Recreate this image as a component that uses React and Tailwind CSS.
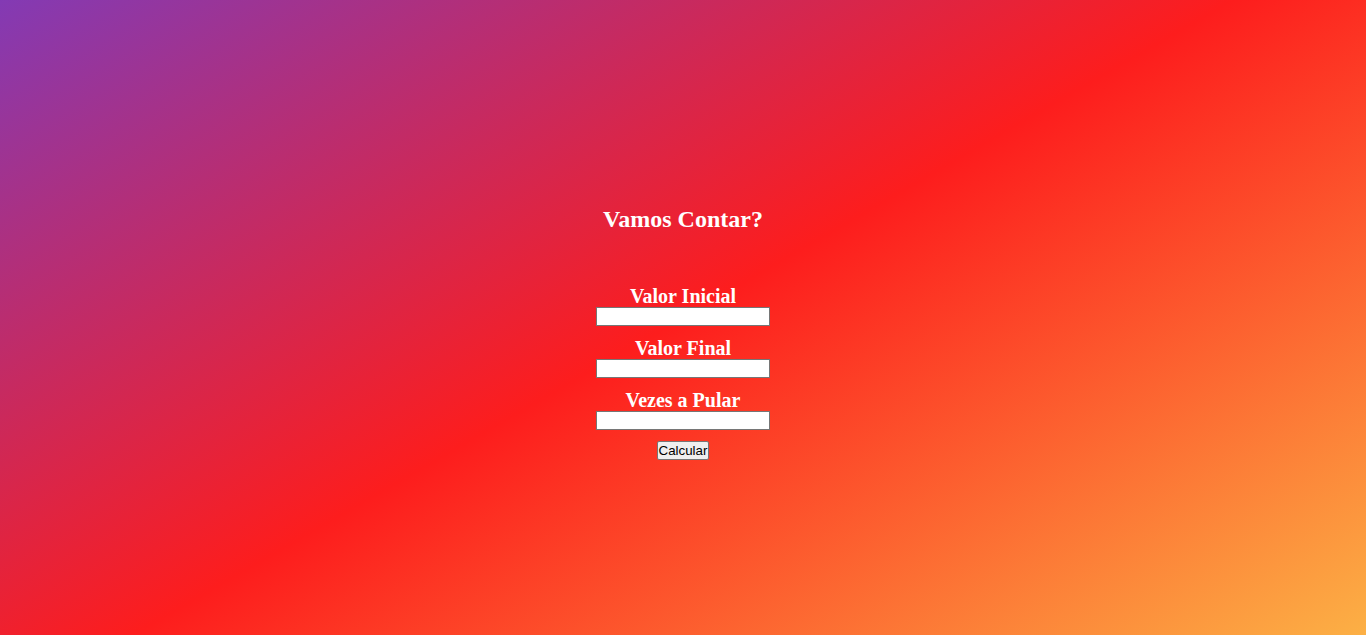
import React from "react";

const fields = ["Valor Inicial", "Valor Final", "Vezes a Pular"];

const App = () => {
  return (
    <div className="min-h-screen w-full bg-[linear-gradient(150deg,#833ab4,#fd1d1d,#fcb045)] font-['Liberation_Serif','Times_New_Roman',serif] text-white">
      <div className="flex flex-col items-center pt-[206px]">
        <h2 className="text-[24px] font-bold leading-[27px]">Vamos Contar?</h2>

        <div className="flex flex-col items-center mt-[52px]">
          {fields.map((label, index) => (
            <div key={index} className="flex flex-col items-center mb-[11px]">
              <label className="text-[20px] font-bold leading-[22px]">{label}</label>
              <input
                type="text"
                className="w-[174px] h-[19px] bg-white border border-solid border-[#767676] px-[2px] text-[13.33px] text-black font-['Liberation_Sans',Arial,sans-serif] outline-none"
              />
            </div>
          ))}
          <button className="h-[19px] px-[1px] bg-[#efefef] border border-solid border-[#767676] rounded-[2px] text-[13.33px] leading-[15px] text-black font-['Liberation_Sans',Arial,sans-serif]">
            Calcular
          </button>
        </div>
      </div>
    </div>
  );
};

export default App;
